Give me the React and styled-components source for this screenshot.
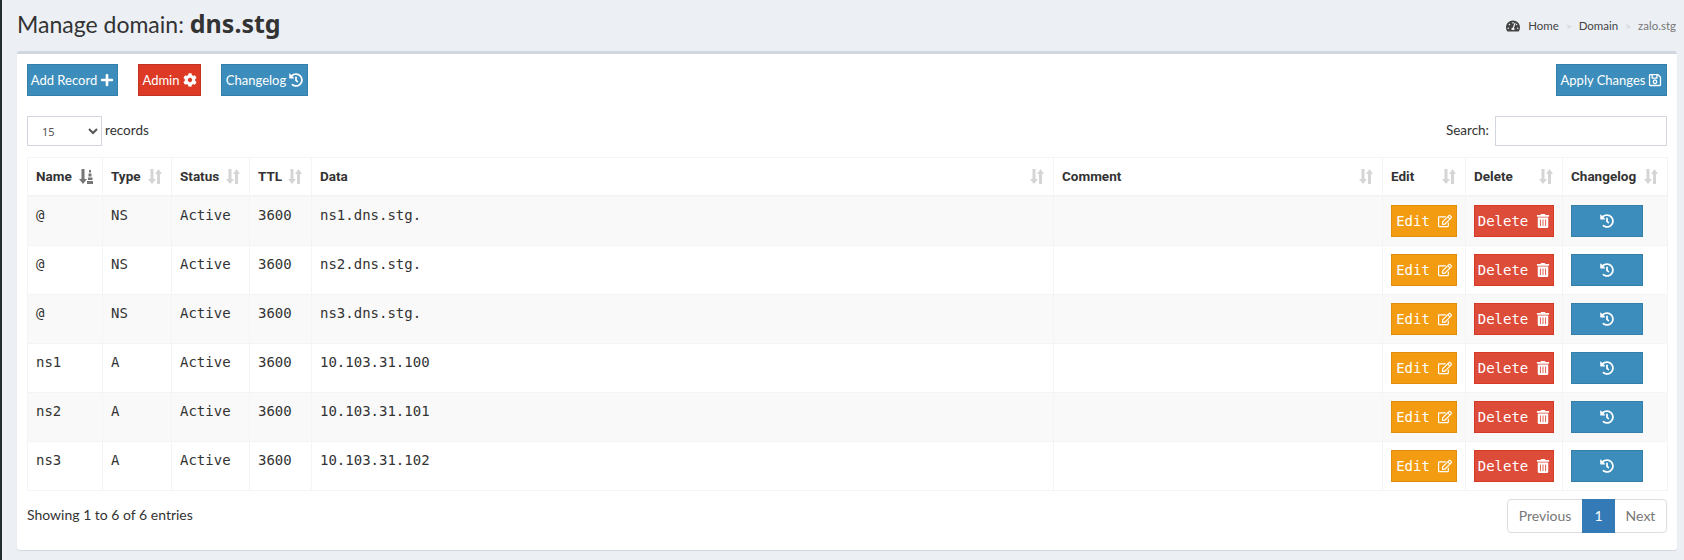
import styled, { createGlobalStyle } from 'styled-components'
import { FaPlus, FaCog, FaHistory, FaRegSave, FaRegEdit, FaTrashAlt, FaTachometerAlt } from 'react-icons/fa'

const GlobalStyle = createGlobalStyle`
  html, body { margin: 0; padding: 0; background: #ecf0f5; }
  body { font-family: Lato, "Noto Sans", sans-serif; color: #333; font-size: 14px; }
`

const Page = styled.div`
  width: 1684px;
  height: 560px;
  box-sizing: border-box;
  border-left: 2px solid #222d32;
  padding: 0 7px 10px 15px;
  overflow: hidden;
`

const Header = styled.header`
  display: flex;
  align-items: center;
  justify-content: space-between;
  height: 51px;
  padding-right: 1px;
`

const Title = styled.h1`
  margin: 0 0 6px;
  font-size: 23px;
  font-weight: 400;
  color: #333;
  b { font-family: "Noto Sans", sans-serif; font-size: 25px; font-weight: 700; }
`

const Crumbs = styled.div`
  display: flex;
  align-items: center;
  gap: 7px;
  font-size: 11.5px;
  color: #444;
  svg { font-size: 14px; margin-right: 1px; }
`

const Sep = styled.span`
  color: #ccc;
  font-size: 10px;
`

const CrumbCurrent = styled.span`
  color: #777;
`

const Box = styled.section`
  background: #fff;
  border-top: 3px solid #d2d6de;
  border-radius: 3px;
  box-shadow: 0 1px 1px rgba(0, 0, 0, 0.1);
  height: 499px;
  box-sizing: border-box;
  padding: 10px 10px 0;
`

const Toolbar = styled.div`
  display: flex;
  gap: 20px;
  height: 32px;
`

const Button = styled.button`
  display: inline-flex;
  align-items: center;
  justify-content: center;
  gap: ${p => (p.$mono ? 8 : 3)}px;
  height: 32px;
  width: ${p => p.$w}px;
  padding: 0;
  box-sizing: border-box;
  border: 1px solid ${p => p.$border};
  background: ${p => p.$bg};
  color: #fff;
  font-family: ${p => (p.$mono ? '"DejaVu Sans Mono", monospace' : 'Lato, "Noto Sans", sans-serif')};
  font-size: ${p => (p.$mono ? 14 : 13)}px;
  margin-left: ${p => (p.$push ? 'auto' : '0')};
  svg { font-size: 14px; flex: none; }
`

const Controls = styled.div`
  display: flex;
  align-items: center;
  justify-content: space-between;
  margin-top: 20px;
  height: 30px;
`

const Label = styled.label`
  display: flex;
  align-items: center;
  gap: 3px;
  font-size: 13.5px;
  span { margin-bottom: 3px; }
`

const Select = styled.select`
  width: 75px;
  height: 30px;
  border: 1px solid #d2d6de;
  background: #fff;
  font-family: "Noto Sans", sans-serif;
  font-size: 11px;
  padding-left: 10px;
  color: #555;
`

const SearchInput = styled.input`
  width: 172px;
  height: 30px;
  box-sizing: border-box;
  border: 1px solid #d2d6de;
  margin-left: 3px;
`

const Table = styled.table`
  width: 1640px;
  margin-top: 11px;
  border-collapse: collapse;
  table-layout: fixed;
  border: 1px solid #f4f4f4;
`

const Th = styled.th`
  width: ${p => p.$w}px;
  height: 38px;
  box-sizing: border-box;
  padding: 0 8px;
  border: 1px solid #f4f4f4;
  border-bottom: 2px solid #f4f4f4;
  text-align: left;
  font-family: Roboto, sans-serif;
  font-size: 13.5px;
  font-weight: 700;
  color: #333;
`

const ThInner = styled.div`
  display: flex;
  align-items: center;
  justify-content: space-between;
  svg { flex: none; margin-right: 1px; }
`

const Row = styled.tr`
  background: ${p => (p.$odd ? '#f9f9f9' : '#fff')};
`

const Td = styled.td`
  height: 49px;
  box-sizing: border-box;
  padding: 8px;
  border: 1px solid #f4f4f4;
  vertical-align: top;
  font-family: "DejaVu Sans Mono", monospace;
  font-size: 14px;
  line-height: 20px;
  color: #333;
`

const Footer = styled.div`
  display: flex;
  align-items: flex-start;
  justify-content: space-between;
  margin-top: 8px;
`

const Info = styled.div`
  font-size: 14px;
  padding-top: 7px;
`

const Pager = styled.div`
  display: flex;
  height: 34px;
  box-sizing: border-box;
  border: 1px solid #ddd;
  border-radius: 4px;
  font-size: 14px;
  color: #777;
`

const PageLink = styled.span`
  display: flex;
  align-items: center;
  justify-content: center;
  width: ${p => p.$w}px;
  margin: ${p => (p.$active ? '-1px 0' : '0')};
  background: ${p => (p.$active ? '#337ab7' : 'transparent')};
  color: ${p => (p.$active ? '#fff' : '#777')};
`

// datatables sort glyph, the active column gets the stepped one
const SortIcon = ({ active }) => (
  <svg width="14" height="15" viewBox="0 0 14 15" fill={active ? '#777' : '#d5d5d5'}>
    <path d="M2.500 0h3v10H8l-4 5-4-5h2.500z" />
    {active ? (
      <path d="M8 12h6v3H8zM9 8.500h4.500v2.500H9zM9.500 4.500h3v3h-3zM10 1h2v2.500h-2z" />
    ) : (
      <path d="M9 15h3V5h2l-3.500-5L7 5h2z" />
    )}
  </svg>
)

const columns = [
  ['Name', 75], ['Type', 69], ['Status', 78], ['TTL', 62], ['Data', 742],
  ['Comment', 329], ['Edit', 83], ['Delete', 97], ['Changelog', 105],
]

const records = [
  ['@', 'NS', 'ns1.dns.stg.'],
  ['@', 'NS', 'ns2.dns.stg.'],
  ['@', 'NS', 'ns3.dns.stg.'],
  ['ns1', 'A', '10.103.31.100'],
  ['ns2', 'A', '10.103.31.101'],
  ['ns3', 'A', '10.103.31.102'],
]

const BLUE = ['#3c8dbc', '#367fa9']

export default function App() {
  return (
    <Page>
      <GlobalStyle />
      <Header>
        <Title>Manage domain: <b>dns.stg</b></Title>
        <Crumbs>
          <FaTachometerAlt /> <span>Home</span> <Sep>&gt;</Sep> <span>Domain</span> <Sep>&gt;</Sep>
          <CrumbCurrent>zalo.stg</CrumbCurrent>
        </Crumbs>
      </Header>
      <Box>
        <Toolbar>
          <Button $w={91} $bg={BLUE[0]} $border={BLUE[1]}>Add Record <FaPlus /></Button>
          <Button $w={63} $bg="#dd3a25" $border="#c23321">Admin <FaCog /></Button>
          <Button $w={87} $bg={BLUE[0]} $border={BLUE[1]}>Changelog <FaHistory /></Button>
          <Button $w={111} $push $bg={BLUE[0]} $border={BLUE[1]}>Apply Changes <FaRegSave /></Button>
        </Toolbar>
        <Controls>
          <Label>
            <Select defaultValue="15"><option>15</option></Select> <span>records</span>
          </Label>
          <Label><span>Search:</span> <SearchInput /></Label>
        </Controls>
        <Table>
          <thead>
            <tr>
              {columns.map(([name, w], i) => (
                <Th key={name} $w={w}>
                  <ThInner>{name}<SortIcon active={i === 0} /></ThInner>
                </Th>
              ))}
            </tr>
          </thead>
          <tbody>
            {records.map((r, i) => (
              <Row key={i} $odd={i % 2 === 0}>
                <Td>{r[0]}</Td>
                <Td>{r[1]}</Td>
                <Td>Active</Td>
                <Td>3600</Td>
                <Td>{r[2]}</Td>
                <Td />
                <Td><Button $mono $w={66} $bg="#f39c12" $border="#e08e0b">Edit <FaRegEdit /></Button></Td>
                <Td><Button $mono $w={80} $bg="#dd4b39" $border="#d73925">Delete <FaTrashAlt /></Button></Td>
                <Td><Button $mono $w={72} $bg={BLUE[0]} $border={BLUE[1]}><FaHistory /></Button></Td>
              </Row>
            ))}
          </tbody>
        </Table>
        <Footer>
          <Info>Showing 1 to 6 of 6 entries</Info>
          <Pager>
            <PageLink $w={74}>Previous</PageLink>
            <PageLink $w={33} $active>1</PageLink>
            <PageLink $w={51}>Next</PageLink>
          </Pager>
        </Footer>
      </Box>
    </Page>
  )
}
